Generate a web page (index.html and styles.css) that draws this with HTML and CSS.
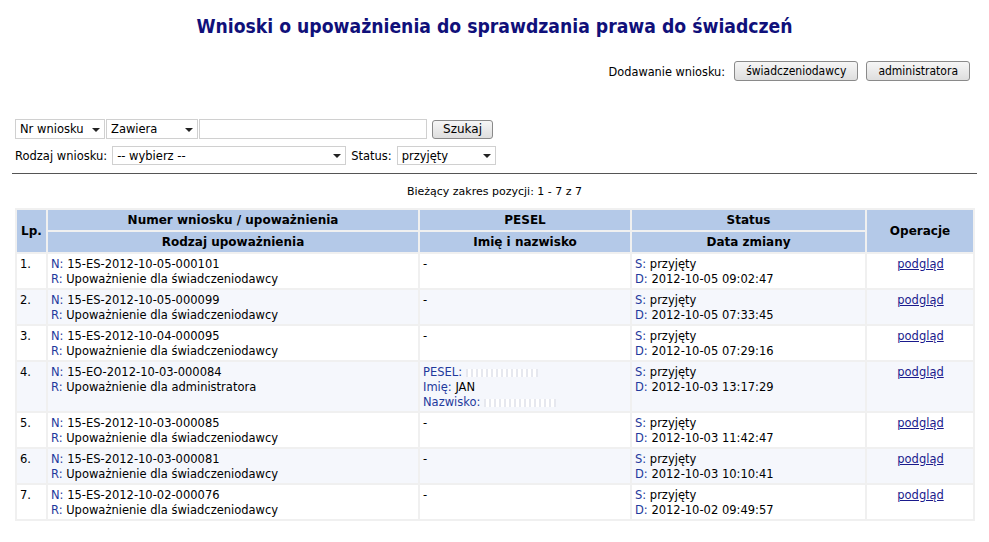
FILE: index.html
```html
<!DOCTYPE html>
<html>
<head>
<meta charset="utf-8">
<title>Wnioski o upoważnienia</title>
<link rel="stylesheet" href="styles.css">
</head>
<body>
<div class="page">

<h1 class="title">Wnioski o upoważnienia do sprawdzania prawa do świadczeń</h1>

<div class="add-bar">
  <span class="add-label">Dodawanie wniosku:</span>
  <button class="btn" type="button">świadczeniodawcy</button>
  <button class="btn" type="button">administratora</button>
</div>

<form class="filters">
  <div class="frow">
    <span class="sel sel-field"><select><option>Nr wniosku</option></select></span>
    <span class="sel sel-op"><select><option>Zawiera</option></select></span>
    <input class="txt" type="text">
    <button class="btn btn-search" type="button">Szukaj</button>
  </div>
  <div class="frow frow2">
    <label class="flabel">Rodzaj wniosku:</label>
    <span class="sel sel-kind"><select><option>-- wybierz --</option></select></span>
    <label class="flabel">Status:</label>
    <span class="sel sel-status"><select><option>przyjęty</option></select></span>
  </div>
</form>

<hr class="sep">

<div class="range">Bieżący zakres pozycji: 1 - 7 z 7</div>

<table class="list">
  <thead>
    <tr>
      <th rowspan="2" class="c-lp">Lp.</th>
      <th class="c-nr">Numer wniosku / upoważnienia</th>
      <th class="c-pesel">PESEL</th>
      <th class="c-status">Status</th>
      <th rowspan="2" class="c-op">Operacje</th>
    </tr>
    <tr>
      <th>Rodzaj upoważnienia</th>
      <th>Imię i nazwisko</th>
      <th>Data zmiany</th>
    </tr>
  </thead>
  <tbody>
    <tr>
      <td>1.</td>
      <td><span class="k">N:</span> 15-ES-2012-10-05-000101<br><span class="k">R:</span> Upoważnienie dla świadczeniodawcy</td>
      <td>-</td>
      <td><span class="k">S:</span> przyjęty<br><span class="k">D:</span> 2012-10-05 09:02:47</td>
      <td class="op"><a href="#">podgląd</a></td>
    </tr>
    <tr class="alt">
      <td>2.</td>
      <td><span class="k">N:</span> 15-ES-2012-10-05-000099<br><span class="k">R:</span> Upoważnienie dla świadczeniodawcy</td>
      <td>-</td>
      <td><span class="k">S:</span> przyjęty<br><span class="k">D:</span> 2012-10-05 07:33:45</td>
      <td class="op"><a href="#">podgląd</a></td>
    </tr>
    <tr>
      <td>3.</td>
      <td><span class="k">N:</span> 15-ES-2012-10-04-000095<br><span class="k">R:</span> Upoważnienie dla świadczeniodawcy</td>
      <td>-</td>
      <td><span class="k">S:</span> przyjęty<br><span class="k">D:</span> 2012-10-05 07:29:16</td>
      <td class="op"><a href="#">podgląd</a></td>
    </tr>
    <tr class="alt">
      <td>4.</td>
      <td><span class="k">N:</span> 15-EO-2012-10-03-000084<br><span class="k">R:</span> Upoważnienie dla administratora</td>
      <td><span class="k">PESEL:</span> <span class="hidden h-pesel"></span><br><span class="k">Imię:</span> JAN<br><span class="k">Nazwisko:</span> <span class="hidden h-name"></span></td>
      <td><span class="k">S:</span> przyjęty<br><span class="k">D:</span> 2012-10-03 13:17:29</td>
      <td class="op"><a href="#">podgląd</a></td>
    </tr>
    <tr>
      <td>5.</td>
      <td><span class="k">N:</span> 15-ES-2012-10-03-000085<br><span class="k">R:</span> Upoważnienie dla świadczeniodawcy</td>
      <td>-</td>
      <td><span class="k">S:</span> przyjęty<br><span class="k">D:</span> 2012-10-03 11:42:47</td>
      <td class="op"><a href="#">podgląd</a></td>
    </tr>
    <tr class="alt">
      <td>6.</td>
      <td><span class="k">N:</span> 15-ES-2012-10-03-000081<br><span class="k">R:</span> Upoważnienie dla świadczeniodawcy</td>
      <td>-</td>
      <td><span class="k">S:</span> przyjęty<br><span class="k">D:</span> 2012-10-03 10:10:41</td>
      <td class="op"><a href="#">podgląd</a></td>
    </tr>
    <tr>
      <td>7.</td>
      <td><span class="k">N:</span> 15-ES-2012-10-02-000076<br><span class="k">R:</span> Upoważnienie dla świadczeniodawcy</td>
      <td>-</td>
      <td><span class="k">S:</span> przyjęty<br><span class="k">D:</span> 2012-10-02 09:49:57</td>
      <td class="op"><a href="#">podgląd</a></td>
    </tr>
  </tbody>
</table>

</div>
</body>
</html>
```

FILE: styles.css
```css
body {
  margin: 0;
  font-family: "DejaVu Sans", Verdana, sans-serif;
  font-size: 11.5px;
  color: #000;
  background: #fff;
}

.page {
  padding: 16px 12px 0 12px;
}

.title {
  margin: 0;
  font-family: "DejaVu Sans Condensed", "DejaVu Sans", sans-serif;
  font-size: 19.2px;
  line-height: 22px;
  font-weight: bold;
  text-align: center;
  color: #10107a;
}

/* add buttons */
.add-bar {
  display: flex;
  justify-content: flex-end;
  align-items: center;
  margin-top: 23px;
  padding-right: 7px;
}

.add-label {
  font-family: "DejaVu Sans Condensed", "DejaVu Sans", sans-serif;
  font-size: 12.6px;
  margin-right: 9px;
}

.btn {
  font-family: "DejaVu Sans Condensed", "DejaVu Sans", sans-serif;
  font-size: 12px;
  height: 20px;
  padding: 0 11px;
  border: 1px solid #8a8a8a;
  border-radius: 3px;
  background: linear-gradient(#f6f6f6, #dedede);
  color: #000;
  cursor: pointer;
}

.add-bar .btn + .btn {
  margin-left: 8px;
}

/* filters */
.filters {
  margin: 38px 0 0 3px;
}

.frow {
  display: flex;
  align-items: center;
  height: 20px;
}

.frow2 {
  margin-top: 7px;
  height: 19px;
}

.sel {
  position: relative;
  display: inline-block;
}

.sel select {
  -webkit-appearance: none;
  appearance: none;
  font-family: "DejaVu Sans", Verdana, sans-serif;
  font-size: 11.5px;
  height: 20px;
  padding: 0 0 0 4px;
  border: 1px solid #d0d0d0;
  border-radius: 0;
  background: #fff;
  color: #000;
  width: 100%;
}

.sel::after {
  content: "";
  position: absolute;
  right: 5px;
  top: 9px;
  border-left: 4px solid transparent;
  border-right: 4px solid transparent;
  border-top: 4px solid #222;
  pointer-events: none;
}

.sel-field { width: 90px; }
.sel-op { width: 92px; margin-left: 1px; }
.sel-kind { width: 234px; margin: 0 5px 0 5px; }
.sel-status { width: 99px; margin-left: 5px; }
.frow2 .sel select { height: 19px; }
.frow2 .sel::after { top: 8px; }

.txt {
  width: 228px;
  height: 20px;
  box-sizing: border-box;
  margin: 0 0 0 1px;
  border: 1px solid #d0d0d0;
  font-family: "DejaVu Sans", Verdana, sans-serif;
}

.btn-search {
  margin-left: 5px;
  height: 19px;
  width: 61px;
  padding: 0;
  font-family: "DejaVu Sans", Verdana, sans-serif;
}

.flabel {
  font-size: 11.5px;
  font-family: "DejaVu Sans", Verdana, sans-serif;
}

.sep {
  margin: 8px 0 0 0;
  border: 0;
  border-top: 1px solid #555;
  height: 0;
}

.range {
  margin-top: 11px;
  text-align: center;
  font-size: 11px;
  line-height: 14px;
}

/* list table */
.list {
  margin: 9px 0 0 3px;
  width: 960px;
  border-collapse: separate;
  border-spacing: 2px;
  background: #f0f0f0;
}

.list th {
  background: #b4c9e8;
  font-weight: bold;
  font-size: 12px;
  height: 20px;
  padding: 0 2px;
  text-align: center;
}

.list th.c-lp { width: 25px; }
.list th.c-nr { width: 366px; }
.list th.c-pesel { width: 206px; }
.list th.c-status { width: 229px; }

.list td {
  background: #fff;
  vertical-align: top;
  line-height: 15px;
  padding: 3px 2px 1px 3px;
}

.list tr.alt td {
  background: #f5f7fc;
}

.k {
  color: #1f3a9c;
}

.op {
  text-align: center;
}

.op a {
  color: #1a1a8c;
  text-decoration: underline;
}

.hidden {
  display: inline-block;
  height: 8px;
  vertical-align: middle;
  background: repeating-linear-gradient(90deg, #e6e8ef 0 2px, #fff 2px 5px);
}

.h-pesel { width: 72px; }
.h-name { width: 72px; }
```
